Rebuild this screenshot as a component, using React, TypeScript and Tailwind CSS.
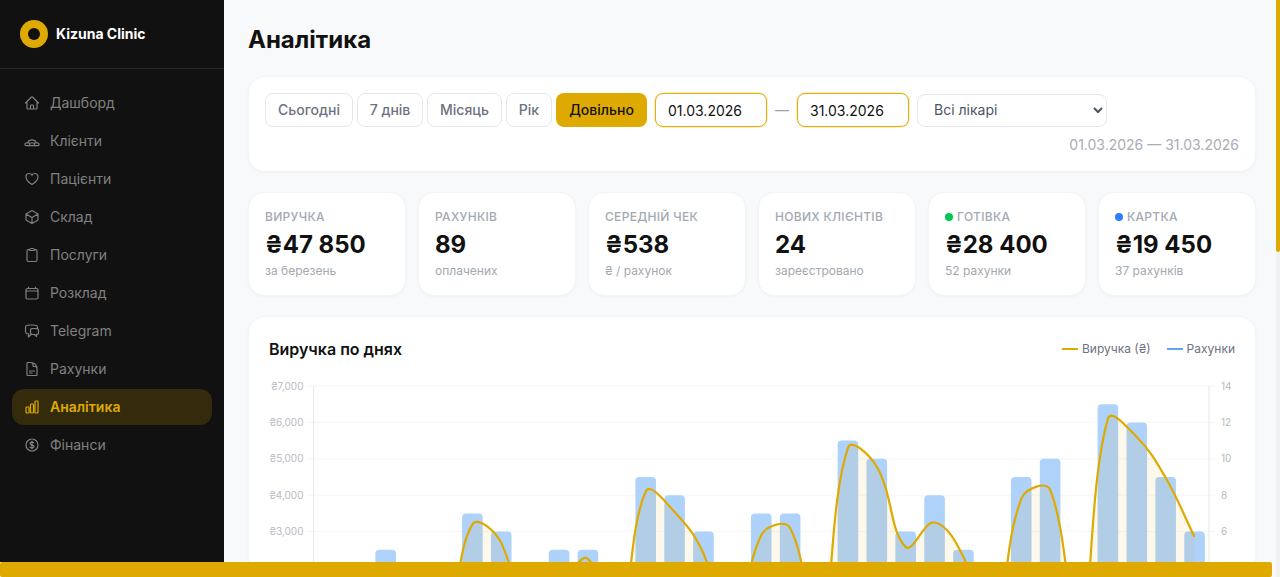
import {
  HiOutlineHome,
  HiOutlineHeart,
  HiOutlineCube,
  HiOutlineClipboard,
  HiOutlineCalendar,
  HiOutlineChatBubbleLeftRight,
  HiOutlineDocumentText,
  HiOutlineChartBar,
  HiOutlineCurrencyDollar,
} from "react-icons/hi2";

function ClientsIcon({ className }: { className?: string; strokeWidth?: number }) {
  return (
    <svg viewBox="0 0 24 24" fill="none" stroke="currentColor" strokeWidth={1.8} className={className}>
      <rect x="1.5" y="15" width="21" height="4" rx="1.5" />
      <path d="M5.5 15c.6-2.800 3.200-4.600 6.500-4.600s5.900 1.800 6.500 4.600" />
      <path d="M8.500 15v4M15.500 15v4" />
    </svg>
  );
}

const navItems = [
  { label: "Дашборд", icon: HiOutlineHome },
  { label: "Клієнти", icon: ClientsIcon },
  { label: "Пацієнти", icon: HiOutlineHeart },
  { label: "Склад", icon: HiOutlineCube },
  { label: "Послуги", icon: HiOutlineClipboard },
  { label: "Розклад", icon: HiOutlineCalendar },
  { label: "Telegram", icon: HiOutlineChatBubbleLeftRight },
  { label: "Рахунки", icon: HiOutlineDocumentText },
  { label: "Аналітика", icon: HiOutlineChartBar, active: true },
  { label: "Фінанси", icon: HiOutlineCurrencyDollar },
];

const periods = [
  { label: "Сьогодні", width: "w-[88px]" },
  { label: "7 днів", width: "w-[66px]" },
  { label: "Місяць", width: "w-[75px]" },
  { label: "Рік", width: "w-[46px]" },
];

const kpis = [
  { label: "Виручка", value: "₴47 850", sub: "за березень" },
  { label: "Рахунків", value: "89", sub: "оплачених" },
  { label: "Середній чек", value: "₴538", sub: "₴ / рахунок" },
  { label: "Нових клієнтів", value: "24", sub: "зареєстровано" },
  { label: "Готівка", value: "₴28 400", sub: "52 рахунки", dot: "bg-green-500" },
  { label: "Картка", value: "₴19 450", sub: "37 рахунків", dot: "bg-blue-500" },
];

// per day of the month
const invoices = [0, 0, 5, 0, 0, 7, 6, 0, 5, 5, 0, 9, 8, 6, 0, 7, 7, 0, 11, 10, 6, 8, 5, 0, 9, 10, 0, 13, 12, 9, 6];
const revenue = [
  0, 0, 1500, 0, 0, 3200, 2690, 0, 1300, 2250, 0, 4100, 3540, 2400, 0, 2900, 3100, 0, 5300, 4780, 2580, 3250, 2300, 0,
  3900, 4150, 0, 6100, 5600, 4480, 2850,
];

const plotLeft = 44.5;
const plotRight = 940;
const plotTop = 10;
const unit = 36.4;
const baseY = plotTop + unit * 7;
const step = (plotRight - plotLeft) / 31;

const points = revenue.map((v, i) => ({
  x: plotLeft + (i + 0.5) * step,
  y: baseY - (v / 1000) * unit,
}));

function buildLine() {
  const t = 0.4;
  const cps = points.map((p, i) => {
    const a = points[i - 1] ?? p;
    const b = points[i + 1] ?? p;
    const d01 = Math.hypot(p.x - a.x, p.y - a.y);
    const d12 = Math.hypot(b.x - p.x, b.y - p.y);
    const sum = d01 + d12 || 1;
    return {
      px: p.x - (t * d01 * (b.x - a.x)) / sum,
      py: p.y - (t * d01 * (b.y - a.y)) / sum,
      nx: p.x + (t * d12 * (b.x - a.x)) / sum,
      ny: p.y + (t * d12 * (b.y - a.y)) / sum,
    };
  });
  let d = `M${points[0].x} ${points[0].y}`;
  for (let i = 1; i < points.length; i++) {
    d += `C${cps[i - 1].nx} ${cps[i - 1].ny} ${cps[i].px} ${cps[i].py} ${points[i].x} ${points[i].y}`;
  }
  return d;
}

const linePath = buildLine();
const fillPath = `${linePath}L${points[30].x} ${baseY}L${points[0].x} ${baseY}Z`;

function RevenueChart() {
  // the lower ticks sit below the fold
  const ticks = [7, 6, 5, 4, 3];
  return (
    <svg width="966" height="300" className="mt-[15px] block">
      {ticks.map((k) => {
        const y = baseY - k * unit;
        return (
          <g key={k}>
            <line x1={plotLeft - 7} x2={plotRight + 6} y1={y} y2={y} stroke="#f4f5f7" />
            <text x={plotLeft - 10} y={y + 3.5} textAnchor="end" fontSize="10" fill="#b7bac1">
              ₴{k},000
            </text>
            <text x={plotRight + 12} y={y + 3.5} fontSize="10" fill="#b7bac1">
              {k * 2}
            </text>
          </g>
        );
      })}
      <line x1={plotLeft} x2={plotLeft} y1={plotTop} y2={baseY} stroke="#e5e7eb" />
      <line x1={plotRight} x2={plotRight} y1={plotTop} y2={baseY} stroke="#e5e7eb" />
      {invoices.map((v, i) =>
        v > 0 ? (
          <path
            key={i}
            d={`M${plotLeft + (i + 0.5) * step - 10.3} ${baseY}V${baseY - (v * unit) / 2 + 4}q0 -4 4 -4H${plotLeft + (i + 0.5) * step + 6.3}q4 0 4 4V${baseY}Z`}
            fill="#afd2fb"
          />
        ) : null,
      )}
      <path d={fillPath} fill="#dfaa00" fillOpacity={0.08} />
      <path d={linePath} fill="none" stroke="#dfaa00" strokeWidth={2.2} />
    </svg>
  );
}

export default function App() {
  return (
    <div className="flex h-[577px] w-[1280px] overflow-hidden bg-[#f8f9fb] font-['Inter',sans-serif]">
      <div className="flex min-w-0 flex-1 flex-col">
        <div className="flex min-h-0 flex-1">
          <aside className="w-[224px] shrink-0 bg-[#111111]">
            <div className="flex h-[69px] items-center gap-2 border-b border-[#2a2a2a] pb-[1px] pl-5">
              <div className="flex h-7 w-7 items-center justify-center rounded-full bg-[#dfaa00]">
                <div className="h-3 w-3 rounded-full bg-[#111111]" />
              </div>
              <span className="text-sm font-bold text-white">Kizuna Clinic</span>
            </div>
            <nav className="flex flex-col gap-[2px] px-3 py-4">
              {navItems.map((item) => (
                <div
                  key={item.label}
                  className={
                    item.active
                      ? "flex h-9 items-center gap-[10px] rounded-xl bg-[#342a0c] px-3 text-sm font-semibold text-[#dfaa00]"
                      : "flex h-9 items-center gap-[10px] rounded-xl px-3 text-sm text-[#808080]"
                  }
                >
                  <item.icon className="h-4 w-4 shrink-0" strokeWidth={1.8} />
                  {item.label}
                </div>
              ))}
            </nav>
          </aside>

          <main className="min-w-0 flex-1 overflow-hidden pl-6 pr-5 pt-6">
            <h1 className="mb-5 text-2xl font-bold text-[#111111]">Аналітика</h1>

            <div className="mb-5 h-[96px] rounded-2xl border border-[#f3f4f6] bg-white px-4 pt-4 shadow-[0_1px_3px_rgba(0,0,0,0.03)]">
              <div className="flex items-end gap-1">
                {periods.map((p) => (
                  <button
                    key={p.label}
                    className={`h-[34px] rounded-lg border border-[#e5e7eb] bg-white text-sm font-medium text-[#6b7280] ${p.width}`}
                  >
                    {p.label}
                  </button>
                ))}
                <button className="h-[34px] w-[91px] rounded-lg bg-[#dfaa00] text-sm font-medium text-[#111111]">
                  Довільно
                </button>
                <input
                  readOnly
                  value="01.03.2026"
                  className="ml-1 h-[34px] w-[112px] rounded-lg border border-[#e3ad0a] bg-white px-3 text-sm text-[#111111] shadow-[0_0_0_1px_rgba(223,170,0,0.2)] outline-none"
                />
                <span className="mx-1 h-[34px] w-[14px] text-center text-sm leading-[34px] text-[#9ca3af]">—</span>
                <input
                  readOnly
                  value="31.03.2026"
                  className="h-[34px] w-[112px] rounded-lg border border-[#e3ad0a] bg-white px-3 text-sm text-[#111111] shadow-[0_0_0_1px_rgba(223,170,0,0.2)] outline-none"
                />
                <select className="ml-1 h-[33px] w-[190px] rounded-lg border border-[#e5e7eb] bg-white px-3 pb-[2px] text-sm text-[#4b5563] outline-none">
                  <option>Всі лікарі</option>
                </select>
              </div>
              <div className="mt-2 text-right text-sm text-[#a8adb6]">01.03.2026 — 31.03.2026</div>
            </div>

            <div className="mb-5 grid grid-cols-6 gap-3">
              {kpis.map((k) => (
                <div
                  key={k.label}
                  className="h-[104px] rounded-2xl border border-[#f3f4f6] bg-white px-4 pt-4 shadow-[0_1px_3px_rgba(0,0,0,0.03)]"
                >
                  <div className="flex h-4 items-center gap-1 text-xs font-medium uppercase tracking-[0.3px] text-[#a3a8b1]">
                    {k.dot && <span className={`h-2 w-2 rounded-full ${k.dot}`} />}
                    {k.label}
                  </div>
                  <div className="mt-1 text-2xl font-bold leading-8 text-[#111111]">{k.value}</div>
                  <div className="mt-[2px] text-xs text-[#a3a8b1]">{k.sub}</div>
                </div>
              ))}
            </div>

            <div className="rounded-2xl border border-[#f3f4f6] bg-white px-5 pt-5 shadow-[0_1px_3px_rgba(0,0,0,0.03)]">
              <div className="flex h-6 items-center justify-between">
                <h2 className="text-base font-semibold text-[#111111]">Виручка по днях</h2>
                <div className="flex items-center gap-4 text-xs text-[#6b7280]">
                  <span className="flex items-center gap-1">
                    <span className="h-[2px] w-4 bg-[#dfaa00]" />
                    Виручка (₴)
                  </span>
                  <span className="flex items-center gap-1">
                    <span className="h-[2px] w-4 bg-[#60a5fa]" />
                    Рахунки
                  </span>
                </div>
              </div>
              <RevenueChart />
            </div>
          </main>
        </div>
        <div className="h-[15px] shrink-0">
          <div className="h-full w-[1272px] rounded-[2px] bg-[#dfaa00]" />
        </div>
      </div>
      <div className="w-1 shrink-0 bg-[#f1f1f1]">
        <div className="h-[252px] rounded-b-[2px] bg-[#dfaa00]" />
      </div>
    </div>
  );
}
